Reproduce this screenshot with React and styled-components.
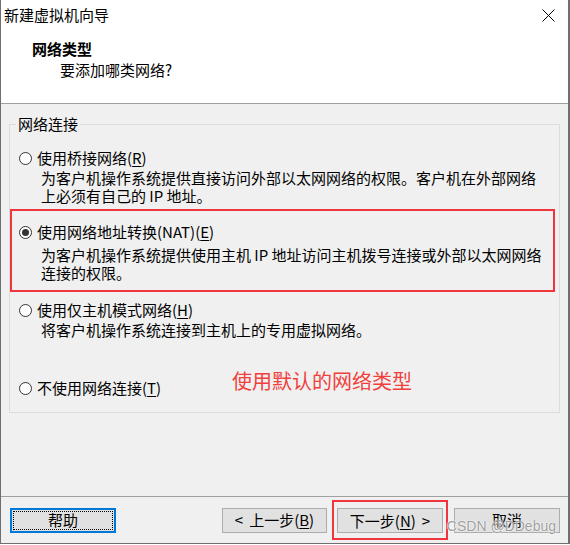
import React from 'react'
import styled, { createGlobalStyle } from 'styled-components'

const Global = createGlobalStyle`
  html, body {
    margin: 0;
    padding: 0;
    background: #ffffff;
  }
  * {
    box-sizing: border-box;
  }
  body {
    font-family: "Noto Sans CJK SC", "Noto Sans", sans-serif;
    font-size: 15px;
    color: #000;
  }
`

const Window = styled.div`
  position: relative;
  width: 570px;
  height: 544px;
  display: flex;
  flex-direction: column;
  border-left: 1px solid #6f6f6f;
  border-right: 2px solid #6f6f6f;
  border-bottom: 1px solid #6f6f6f;
  background: #f0f0f0;
`

const TitleBar = styled.div`
  height: 30px;
  display: flex;
  align-items: center;
  justify-content: space-between;
  padding: 0 13px 0 3px;
  background: #fff;
  line-height: 20px;
`

const Header = styled.div`
  height: 74px;
  background: #fff;
  border-bottom: 1px solid #a0a0a0;
  padding: 9px 0 0 31px;
`

const HeaderTitle = styled.div`
  font-weight: 700;
  line-height: 20px;
`

const HeaderSub = styled.div`
  line-height: 22px;
  padding-left: 28px;
`

const Body = styled.div`
  flex: 1;
  padding: 11px 8px 0 8px;
`

const Group = styled.fieldset`
  margin: 0;
  border: 1px solid #dcdcdc;
  padding: 15px 9px 14px 9px;
  min-width: 0;
`

const Legend = styled.legend`
  padding: 0 2px;
  margin-left: -3px;
  line-height: 18px;
`

const Option = styled.div`
  display: flex;
  flex-direction: column;
  margin-top: ${p => p.$gap || 0}px;
`

const Highlight = styled.div`
  border: 2px solid #f0353b;
  margin: 0 -5px 0 -9px;
  padding: 11px 0 8px 7px;
  margin-top: ${p => p.$gap || 0}px;
`

const Label = styled.div`
  display: flex;
  align-items: center;
  gap: 5px;
  line-height: 20px;
  white-space: nowrap;
`

const Radio = styled.span`
  width: 13px;
  height: 13px;
  border-radius: 50%;
  border: 1px solid #333;
  background: #fff;
  display: flex;
  align-items: center;
  justify-content: center;
  flex: none;

  &::after {
    content: '';
    width: 7px;
    height: 7px;
    border-radius: 50%;
    background: ${p => (p.$checked ? '#333' : 'transparent')};
  }
`

const Desc = styled.div`
  padding-left: 22px;
  line-height: 18px;
  margin-top: ${p => p.$gap || 1}px;
  white-space: nowrap;
`

const Key = styled.span`
  text-decoration: underline;
  text-underline-offset: 2px;
`

const LastRow = styled.div`
  display: grid;
  grid-template-columns: 213px auto;
  align-items: start;
  margin-top: 29px;
`

const Note = styled.div`
  color: #f0403c;
  font-size: 20px;
  line-height: 26px;
  white-space: nowrap;
`

const Footer = styled.div`
  height: 47px;
  border-top: 1px solid #a0a0a0;
  display: flex;
  align-items: center;
  padding: 0 8px 0 9px;
`

const Spacer = styled.div`
  flex: 1;
`

const Button = styled.button`
  width: ${p => p.$w || 105}px;
  height: 25px;
  background: #e1e1e1;
  border: 1px solid #adadad;
  font-family: inherit;
  font-size: 15px;
  color: #000;
  padding: 0;
  line-height: 20px;
  display: flex;
  align-items: center;
  justify-content: center;
  gap: 6px;
`

const FocusButton = styled(Button)`
  border: 2px solid #0078d7;
  position: relative;

  &::before {
    content: '';
    position: absolute;
    inset: 1px;
    border: 1px dotted #000;
  }
`

const RedFrame = styled.div`
  border: 2px solid #f0353b;
  padding: 6px 3px 5px 3px;
  margin: 0 6px 0 5px;
`

const Watermark = styled.div`
  position: absolute;
  right: 12px;
  bottom: 9px;
  font-family: "Liberation Sans", Arial, sans-serif;
  font-size: 14px;
  color: rgba(140, 140, 140, 0.85);
  text-shadow: 0 0 2px #fff, 0 0 1px #fff;
  pointer-events: none;
  white-space: nowrap;
`

const CloseIcon = () => (
  <svg width="13" height="13" viewBox="0 0 13 13">
    <path d="M0.5 0.5 L12.5 12.5 M12.5 0.5 L0.5 12.5" stroke="#000" strokeWidth="1" fill="none" />
  </svg>
)

export default function App() {
  return (
    <>
      <Global />
      <Window>
        <TitleBar>
          <span>新建虚拟机向导</span>
          <CloseIcon />
        </TitleBar>
        <Header>
          <HeaderTitle>网络类型</HeaderTitle>
          <HeaderSub>要添加哪类网络?</HeaderSub>
        </Header>
        <Body>
          <Group>
            <Legend>网络连接</Legend>
            <Option>
              <Label>
                <Radio />
                <span>使用桥接网络(<Key>R</Key>)</span>
              </Label>
              <Desc>
                为客户机操作系统提供直接访问外部以太网网络的权限。客户机在外部网络
                <br />
                上必须有自己的 IP 地址。
              </Desc>
            </Option>
            <Highlight $gap={4}>
              <Label>
                <Radio $checked />
                <span>使用网络地址转换(NAT)(<Key>E</Key>)</span>
              </Label>
              <Desc $gap={4}>
                为客户机操作系统提供使用主机 IP 地址访问主机拨号连接或外部以太网网络
                <br />
                连接的权限。
              </Desc>
            </Highlight>
            <Option $gap={8}>
              <Label>
                <Radio />
                <span>使用仅主机模式网络(<Key>H</Key>)</span>
              </Label>
              <Desc>将客户机操作系统连接到主机上的专用虚拟网络。</Desc>
            </Option>
            <LastRow>
              <Label style={{ marginTop: 10 }}>
                <Radio />
                <span>不使用网络连接(<Key>T</Key>)</span>
              </Label>
              <Note>使用默认的网络类型</Note>
            </LastRow>
          </Group>
        </Body>
        <Footer>
          <FocusButton $w={106}>帮助</FocusButton>
          <Spacer />
          <Button>
            <span>&lt;</span>
            <span>上一步(<Key>B</Key>)</span>
          </Button>
          <RedFrame>
            <Button $w={106}>
              <span>下一步(<Key>N</Key>)</span>
              <span>&gt;</span>
            </Button>
          </RedFrame>
          <Button $w={106}>取消</Button>
        </Footer>
        <Watermark>CSDN @DDebug</Watermark>
      </Window>
    </>
  )
}
